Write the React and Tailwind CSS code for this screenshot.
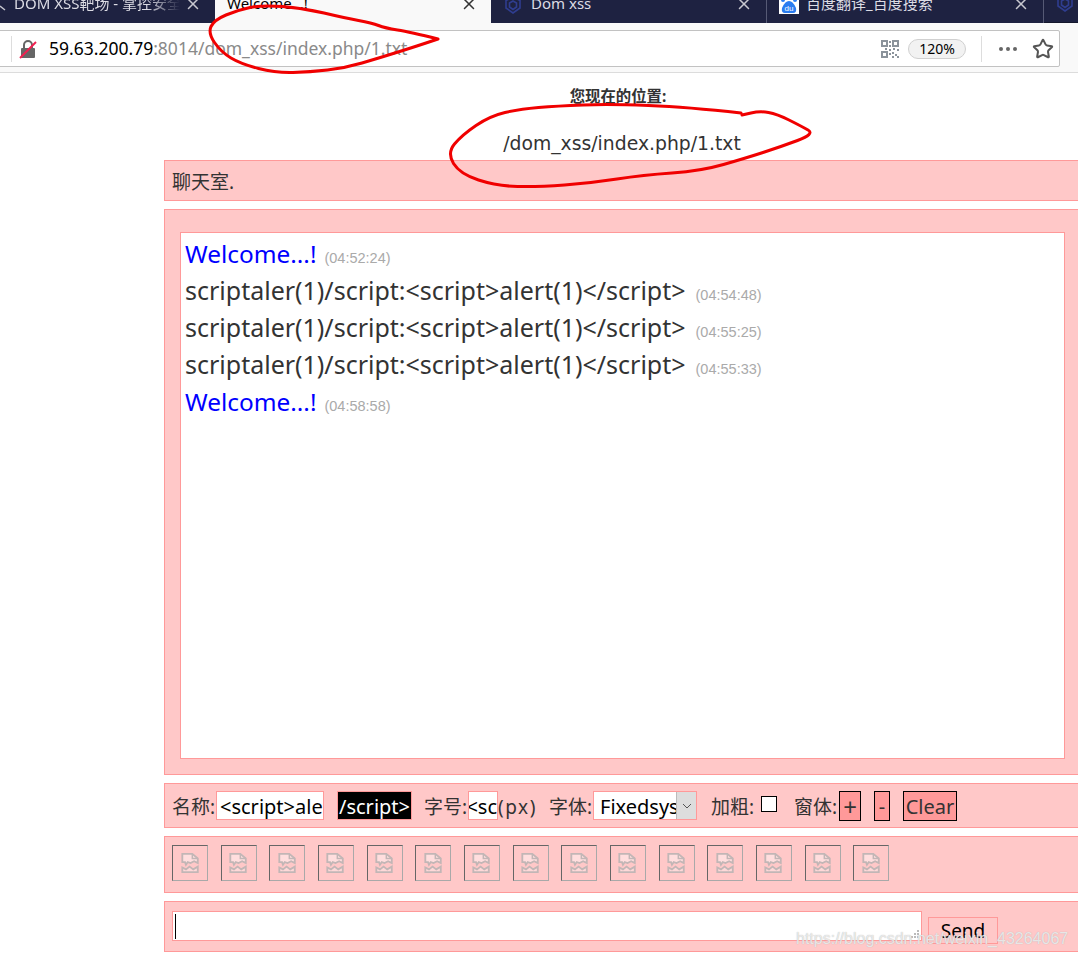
import React from 'react';
import { Star, X } from 'lucide-react';

const cjk = "font-['Noto_Sans','Noto_Sans_CJK_SC',sans-serif]";

// smooth hand-drawn stroke through points
function smooth(pts) {
  let d = `M${pts[0][0]} ${pts[0][1]}`;
  for (let i = 1; i < pts.length - 1; i++) {
    const mx = (pts[i][0] + pts[i + 1][0]) / 2;
    const my = (pts[i][1] + pts[i + 1][1]) / 2;
    d += ` Q${pts[i][0]} ${pts[i][1]} ${mx} ${my}`;
  }
  const last = pts[pts.length - 1];
  return d + ` L${last[0]} ${last[1]}`;
}

const scribbleTop = [[438, 39], [410, 32], [385, 28], [372, 23], [345, 18], [303, 8], [262, 5], [238, 10], [214, 20], [208, 33], [221, 52], [241, 64], [276, 73], [310, 72], [345, 68], [379, 58], [414, 47], [438, 39]];
const scribblePath = [[741, 113], [688, 107], [609, 104], [557, 106], [520, 109], [490, 116], [462, 135], [447, 153], [460, 174], [497, 186], [538, 187], [591, 183], [643, 175], [701, 171], [746, 158], [780, 147], [815, 134], [801, 126], [777, 114], [760, 111], [742, 115]];

const messages = [
  { text: 'Welcome...!', time: '(04:52:24)', blue: true },
  { text: 'scriptaler(1)/script:<script>alert(1)</script>', time: '(04:54:48)' },
  { text: 'scriptaler(1)/script:<script>alert(1)</script>', time: '(04:55:25)' },
  { text: 'scriptaler(1)/script:<script>alert(1)</script>', time: '(04:55:33)' },
  { text: 'Welcome...!', time: '(04:58:58)', blue: true },
];

function Shield() {
  return (
    <svg width="16" height="18" viewBox="0 0 16 18" fill="none" stroke="#2f3d8f" strokeWidth="1.6">
      <path d="M8 1 L15 4.5 V12 L8 17 L1 12 V4.5 Z" />
      <path d="M8 5 L11.5 7 V11 L8 13.5 L4.5 11 V7 Z" />
    </svg>
  );
}

function Baidu() {
  return (
    <div className="relative w-5 h-[15px] bg-white overflow-hidden flex justify-center">
      <svg width="20" height="15" viewBox="0 0 20 15" fill="#2a7cf0">
        <circle cx="4" cy="1" r="2" />
        <circle cx="16" cy="1" r="2" />
        <path d="M3 9 Q6 2 10 2 Q14 2 17 9 Q18 14 14 14 H6 Q2 14 3 9 Z" />
      </svg>
      <span className="absolute bottom-0 text-[8px] leading-[10px] text-white font-['Liberation_Sans',sans-serif]">du</span>
    </div>
  );
}

function Tab({ width, active, children, sep }) {
  return (
    <div className={`h-[23px] shrink-0 flex items-center overflow-hidden ${width} ${active ? 'bg-[#f9f9f9]' : 'bg-[#1e2241]'} ${sep ? 'border-r border-[#565a75]' : ''}`}>
      {children}
      <X className={`ml-auto mr-[13px] -mt-[15px] ${active ? 'text-[#333]' : 'text-[#c8c8d0]'}`} size={18} strokeWidth={2} />
    </div>
  );
}

function TabBar() {
  const text = `${cjk} text-[15px] leading-[20px] -mt-[17px] whitespace-nowrap`;
  return (
    <div className="flex h-[23px] bg-[#1e2241] border-b border-[#14172c]">
      <Tab width="w-[215px]">
        <svg className="ml-0 -mt-[14px] shrink-0" width="8" height="12" viewBox="0 0 8 12" stroke="#c8c8d0" fill="none" strokeWidth="1.4">
          <path d="M0 7 L5 11" />
        </svg>
        <span className={`${text} ml-[6px] w-[166px] overflow-hidden text-[#dcdce4] [mask-image:linear-gradient(to_right,black_80%,transparent)]`}>DOM XSS靶场 - 掌控安全</span>
      </Tab>
      <Tab width="w-[276px]" active>
        <span className={`${text} ml-[12px] text-black`}>Welcome...!</span>
      </Tab>
      <Tab width="w-[276px]" sep>
        <span className="ml-[14px] -mt-[14px] shrink-0"><Shield /></span>
        <span className={`${text} ml-[10px] text-[#dcdce4]`}>Dom xss</span>
      </Tab>
      <Tab width="w-[277px]" sep>
        <span className="ml-[12px] -mt-[10px] shrink-0"><Baidu /></span>
        <span className={`${text} ml-[7px] text-[#dcdce4]`}>百度翻译_百度搜索</span>
      </Tab>
      <div className="ml-[13px] -mt-[6px]"><Shield /></div>
    </div>
  );
}

function Toolbar() {
  return (
    <div className="h-[50px] bg-[#f9f9f9] border-b border-[#dcdcdc] pt-[7px]">
      <div className="ml-[-6px] w-[1066px] h-[37px] bg-white border border-[#c2c2c2] rounded-[2px] flex items-center">
        <div className="ml-[16px] w-px h-[26px] bg-[#dddddd]" />
        <svg className="ml-[7px]" width="18" height="20" viewBox="0 0 18 20">
          <path d="M5 9 V6 a4 4 0 0 1 8 0 V9" fill="none" stroke="#666" strokeWidth="2" />
          <rect x="2" y="9" width="14" height="10" rx="1" fill="#666" />
          <path d="M1 19 L17 3" stroke="#f02050" strokeWidth="2" />
        </svg>
        <span className={`${cjk} ml-[12px] text-[17.5px] text-black whitespace-nowrap`}>
          59.63.200.79<span className="text-[#8a8a8a]">:8014/dom_xss/index.php/1.txt</span>
        </span>
        <svg className="ml-auto" width="18" height="18" viewBox="0 0 18 18" fill="#8b939b">
          <path d="M0 0 H7 V7 H0 Z M2 2 V5 H5 V2 Z M11 0 H18 V7 H11 Z M13 2 V5 H16 V2 Z M0 11 H7 V18 H0 Z M2 13 V16 H5 V13 Z" fillRule="evenodd" />
          <path d="M8 1 H10 V3 H8 Z M8 5 H10 V7 H8 Z M8 9 H10 V11 H8 Z M4 8 H6 V10 H4 Z M12 8 H14 V10 H12 Z M16 9 H18 V11 H16 Z M8 13 H10 V15 H8 Z M11 12 H13 V14 H11 Z M14 14 H16 V16 H14 Z M11 16 H13 V18 H11 Z M16 16 H18 V18 H16 Z" />
        </svg>
        <span className={`${cjk} ml-[9px] w-[58px] h-[20px] rounded-full bg-[#f2f2f2] border border-[#d0d0d0] text-[14px] leading-[18px] text-center text-black`}>120%</span>
        <div className="ml-[15px] w-px h-[26px] bg-[#dddddd]" />
        <div className="ml-[17px] flex gap-[3px]">
          <i className="w-1 h-1 rounded-full bg-[#666]" />
          <i className="w-1 h-1 rounded-full bg-[#666]" />
          <i className="w-1 h-1 rounded-full bg-[#666]" />
        </div>
        <Star className="ml-[15px] mr-[5px] text-[#555]" size={22} strokeWidth={2.2} />
      </div>
    </div>
  );
}

function Panel({ className, children }) {
  return <div className={`w-[930px] bg-[#ffc8c8] border border-[#ff9999] ${className}`}>{children}</div>;
}

function Field({ className, children }) {
  return <div className={`h-[29px] shrink-0 border border-[#ff9999] text-[20px] leading-[30px] overflow-hidden whitespace-nowrap ${className}`}>{children}</div>;
}

function BrokenImage() {
  return (
    <div className="w-9 h-9 shrink-0 flex items-center justify-center border border-[#a9a9a9] border-t-[#666] border-l-[#666]">
      <svg width="19" height="20" viewBox="0 0 20 22" fill="none">
        <path d="M1 1 H12 L18 6 V11 L14 9 L10 11 L7 10 L5 13 L4 10 H1 Z" fill="#fff" fillOpacity=".4" stroke="#c2b6b6" strokeWidth="2" />
        <path d="M12 1 V6 H18" stroke="#c2b6b6" strokeWidth="1.6" />
        <path d="M1 21 V16 L5 18 L9 15 L13 18 L18 15 V21 Z" fill="#fff" fillOpacity=".3" stroke="#c2b6b6" strokeWidth="2" />
      </svg>
    </div>
  );
}

function Controls() {
  const label = 'w-[43px] shrink-0 pt-[3px] text-[19px] text-[#333] whitespace-nowrap';
  const btn = 'h-[30px] shrink-0 mt-px bg-[#ff9999] border border-black text-[20px] leading-[29px] text-center text-[#333]';
  return (
    <Panel className={`h-[45px] mt-2 pl-[7px] flex items-center ${cjk}`}>
      <span className={label}>名称:</span>
      <Field className="ml-px w-[108px] bg-white text-black pl-[3px]">&lt;script&gt;ale</Field>
      <Field className="ml-[13px] w-[75px] bg-black text-white pl-px">/script&gt;</Field>
      <span className={`${label} ml-[12px]`}>字号:</span>
      <Field className="ml-px w-[30px] bg-white text-black flex justify-end">&lt;sc</Field>
      <span className="w-[39px] shrink-0 pt-[3px] text-[19px] tracking-[1.5px] text-center text-[#333]">(px)</span>
      <span className={`${label} ml-[12px]`}>字体:</span>
      <Field className="ml-px w-[104px] bg-white text-black pl-[6px] flex relative text-[19px]">
        <span>Fixedsys</span>
        <span className="absolute right-0 top-0 h-full w-[20px] bg-[#dddddd] border-l border-[#bbbbbb] flex items-center justify-center">
          <svg width="10" height="6" viewBox="0 0 10 6" fill="none" stroke="#555"><path d="M1 1 L5 5 L9 1" /></svg>
        </span>
      </Field>
      <span className={`${label} ml-[14px]`}>加粗:</span>
      <input type="checkbox" readOnly className="ml-[7px] -mt-[4px] w-4 h-4 shrink-0 appearance-none bg-white border border-black" />
      <span className={`${label} ml-[17px]`}>窗体:</span>
      <div className={`${btn} ml-[2px] w-[22px] text-[24px]`}>+</div>
      <div className={`${btn} ml-[13px] w-[16px]`}>-</div>
      <div className={`${btn} ml-[13px] w-[54px]`}>Clear</div>
    </Panel>
  );
}

function App() {
  const imgs = Array.from({ length: 15 }, (_, i) => i);
  return (
    <div className="relative w-[1078px] h-[957px] overflow-hidden bg-white">
      <TabBar />
      <Toolbar />

      <div className="ml-[164px]">
        <div className={`w-[908px] mt-[14px] h-[20px] text-center text-[15.4px] leading-[20px] font-bold text-[#333] ${cjk}`}>您现在的位置:</div>
        <div className="w-[916px] mt-[25px] h-[24px] text-center text-[18.8px] leading-[24px] text-[#333] font-['DejaVu_Sans',sans-serif]">/dom_xss/index.php/1.txt</div>

        <Panel className={`mt-[4px] h-[41px] pl-[7px] text-[19px] leading-[42px] text-[#333] ${cjk}`}>聊天室.</Panel>

        <Panel className="mt-2 h-[566px] pt-[22px] pl-[15px]">
          <div className={`w-[885px] h-[527px] bg-white border border-[#ff9999] pl-[4px] pt-[2px] ${cjk}`}>
            {messages.map((m, i) => (
              <div key={i} className={`h-[37px] leading-[37px] whitespace-nowrap ${m.blue ? 'text-[24.4px] text-[#0000ff]' : 'text-[25px] text-[#333]'}`}>
                {m.text}
                <span className={`${m.blue ? 'ml-[8px]' : 'ml-[10px]'} text-[14.5px] text-[#aaaaaa] font-['Liberation_Sans',sans-serif]`}>{m.time}</span>
              </div>
            ))}
          </div>
        </Panel>

        <Controls />

        <Panel className="mt-2 h-[57px] pl-[7px] pt-[8px] flex gap-[12.67px]">
          {imgs.map((i) => <BrokenImage key={i} />)}
        </Panel>

        <Panel className="mt-2 h-[51px] pl-[7px] pt-[9px] flex">
          <div className="relative w-[750px] h-[30px] bg-white border border-[#ff9999]">
            <div className="absolute left-[2px] top-[2px] w-px h-[25px] bg-black" />
            <svg className="absolute right-[1px] bottom-[1px]" width="9" height="9" viewBox="0 0 9 9" fill="#bbbbbb">
              <rect x="6" y="0" width="2" height="2" /><rect x="3" y="3" width="2" height="2" /><rect x="6" y="3" width="2" height="2" />
              <rect x="0" y="6" width="2" height="2" /><rect x="3" y="6" width="2" height="2" /><rect x="6" y="6" width="2" height="2" />
            </svg>
          </div>
          <div className={`ml-[6px] mt-[6px] w-[70px] h-[27px] bg-[#ffc8c8] border border-[#ff9999] text-[19px] leading-[27px] text-center text-black ${cjk}`}>Send</div>
        </Panel>
      </div>

      <span className="absolute left-[796px] top-[929px] text-[16px] leading-[20px] text-white/70 [text-shadow:0_0_1px_#aaa] font-['Liberation_Sans',sans-serif]">https://blog.csdn.net/weixin_43264067</span>

      <svg className="absolute inset-0 pointer-events-none" width="1078" height="957" fill="none" stroke="#f00000" strokeWidth="3" strokeLinejoin="round" strokeLinecap="round">
        <path d={smooth(scribbleTop)} />
        <path d={smooth(scribblePath)} />
      </svg>
    </div>
  );
}

export default App;
